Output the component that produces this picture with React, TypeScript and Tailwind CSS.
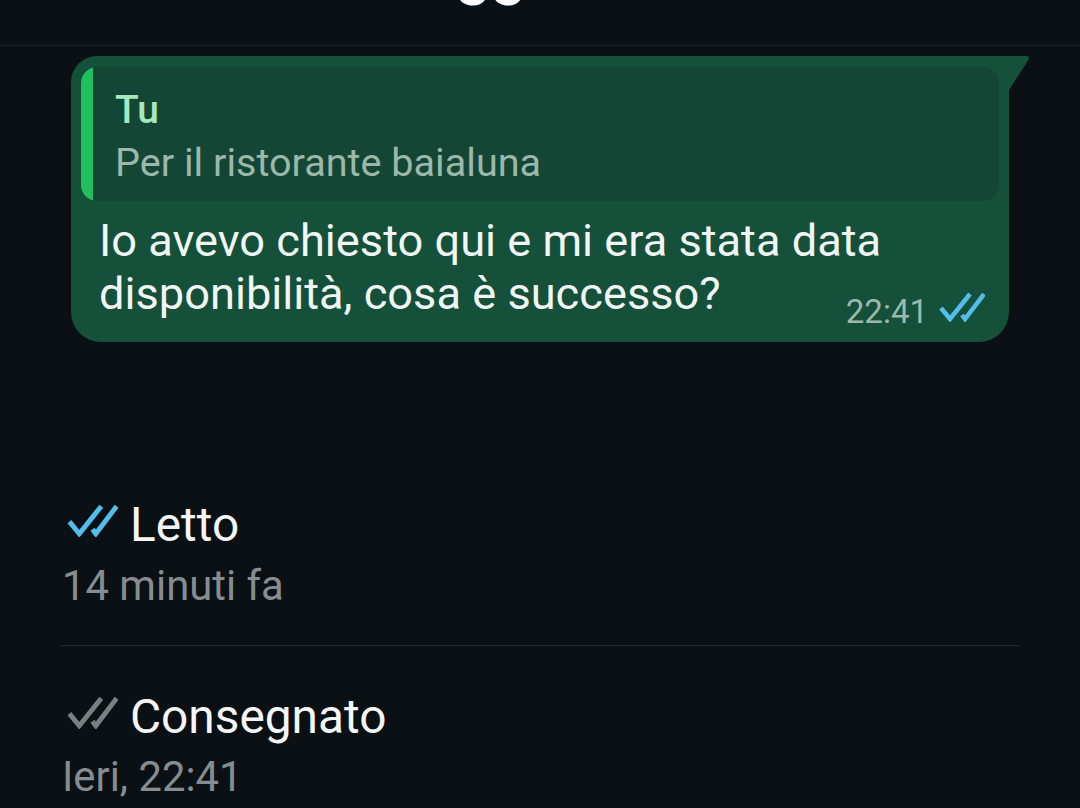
const DoubleCheck = ({ color, className }: { color: string; className: string }) => (
  <svg viewBox="0 0 46 30" className={className} fill="none" stroke={color} strokeWidth="4.5">
    <path d="M2 16 L11 27 L31 2" />
    <path d="M23 23 L26 27 L45 2" />
  </svg>
);

export default function App() {
  return (
    <div className="h-[808px] w-[1080px] overflow-hidden bg-[#0b1014] font-['Roboto',sans-serif] text-white">
      {/* cut off title, only the descenders show */}
      <div className="h-[46px] overflow-hidden border-b border-[#1c2226]">
        <div className="-mt-[68px] pl-[456px] text-[62px] leading-[80px] font-medium">gg</div>
      </div>

      <div className="relative mt-[10px] ml-[71px] w-[938px] rounded-[30px] rounded-tl-[26px] rounded-tr-none bg-[#14503a] px-[10px] pt-[11px] pb-[22px]">
        <svg viewBox="0 0 20 34" className="absolute top-0 -right-[20px] h-[34px] w-[20px]">
          <path d="M0 0 H17 Q22 0 19 4.5 L0 34 Z" fill="#14503a" />
        </svg>

        <div className="flex h-[134px] overflow-hidden rounded-[16px] bg-[#144635]">
          <div className="w-[12px] bg-[#20c05f]" />
          <div className="pl-[22px] pt-[20px]">
            <div className="text-[39px] leading-[46px] font-medium text-[#a5e8bb]">Tu</div>
            <div className="mt-[7px] text-[39.6px] leading-[46px] text-[#9bb8aa]">Per il ristorante baialuna</div>
          </div>
        </div>

        <div className="relative mt-[13px] pl-[18px] text-[45.2px] leading-[53px] text-[#f1f5f3]">
          <div>Io avevo chiesto qui e mi era stata data</div>
          <div>disponibilità, cosa è successo?</div>
          <div className="absolute right-[14px] bottom-[-12px] flex items-center gap-[11px] text-[33px] leading-[40px] text-[#9db9ac]">
            <span className="mt-[10px]">22:41</span>
            <DoubleCheck color="#53bdeb" className="h-[30px] w-[46px]" />
          </div>
        </div>
      </div>

      <div className="mx-[61px] mt-[155px]">
        <div className="flex items-center gap-[12px] pl-[6px]">
          <DoubleCheck color="#53bdeb" className="mb-[9px] h-[33px] w-[51px]" />
          <span className="text-[47.8px] leading-[56px] text-[#f4f6f6]">Letto</span>
        </div>
        <div className="mt-[8px] pl-[1px] text-[41.8px] leading-[50px] text-[#868d91]">14 minuti fa</div>
        <div className="mt-[34px] h-px bg-[#23292d]" />
        <div className="mt-[43px] flex items-center gap-[12px] pl-[6px]">
          <DoubleCheck color="#7a7f82" className="mb-[9px] h-[33px] w-[51px]" />
          <span className="text-[47.8px] leading-[56px] text-[#f4f6f6]">Consegnato</span>
        </div>
        <div className="mt-[7px] pl-[1px] text-[41.8px] leading-[50px] text-[#868d91]">Ieri, 22:41</div>
      </div>
    </div>
  );
}
